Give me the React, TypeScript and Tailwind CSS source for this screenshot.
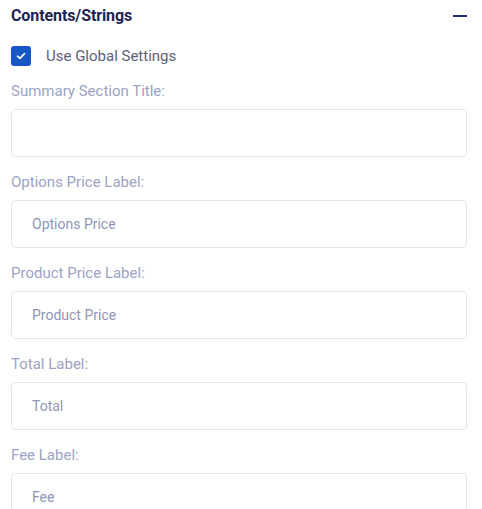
import React from "react";

const fields = [
  { label: "Summary Section Title:", value: "" },
  { label: "Options Price Label:", value: "Options Price" },
  { label: "Product Price Label:", value: "Product Price" },
  { label: "Total Label:", value: "Total" },
  { label: "Fee Label:", value: "Fee" },
];

export default function App() {
  return (
    <div
      className="w-[482px] h-[509px] overflow-hidden bg-white pl-[11px] pr-[15px]"
      style={{ fontFamily: "Roboto, 'Noto Sans', sans-serif" }}
    >
      <div className="h-[32px] flex items-center justify-between">
        <span className="text-[16px] font-bold text-[#1c2454] tracking-[-0.1px]">
          Contents/Strings
        </span>
        <span className="block w-[14px] h-[2px] bg-[#1e2a6b]" />
      </div>
      <label className="mt-[14px] flex items-center h-[20px]">
        <span className="w-[20px] h-[20px] rounded-[3px] bg-[#1656c6] flex items-center justify-center">
          <svg width="10" height="8" viewBox="0 0 10 8" fill="none">
            <path d="M1.5 4.2 L3.9 6.4 L8.5 1.6" stroke="white" strokeWidth="1.6" strokeLinecap="round" strokeLinejoin="round" />
          </svg>
        </span>
        <span className="ml-[15px] text-[15px] text-[#5b6178]">Use Global Settings</span>
      </label>
      {fields.map((f) => (
        <div key={f.label} className="mt-[15px]">
          <div className="h-[20px] leading-[20px] text-[15px] text-[#9ca3c3]">{f.label}</div>
          <div className="mt-[8px] h-[48px] border border-[#e4e6ee] rounded-[4px] flex items-center pl-[20px] text-[14px] text-[#8e96b6]">
            {f.value}
          </div>
        </div>
      ))}
    </div>
  );
}
